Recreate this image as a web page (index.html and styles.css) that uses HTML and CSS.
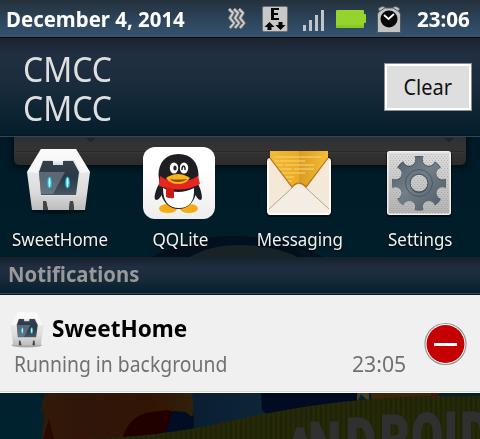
FILE: index.html
```html
<!DOCTYPE html>
<html lang="en">
<head>
<meta charset="utf-8">
<title>Notification panel</title>
<link rel="stylesheet" href="styles.css">
</head>
<body>
<main class="phone">
  <svg class="wallpaper" width="480" height="439" viewBox="0 0 480 439" aria-hidden="true">
    <defs>
      <linearGradient id="sea" x2="0" y2="1"><stop offset="0" stop-color="#001722"/><stop offset=".6" stop-color="#001e2a"/><stop offset="1" stop-color="#00222e"/></linearGradient>
      <linearGradient id="dock" x2="0" y2="1"><stop offset="0" stop-color="#2d2d2d"/><stop offset=".55" stop-color="#343434"/><stop offset="1" stop-color="#2b2b2b"/></linearGradient>
      <linearGradient id="fur" x2="1"><stop offset="0" stop-color="#321a07"/><stop offset=".3" stop-color="#30150a"/><stop offset=".75" stop-color="#321603"/><stop offset="1" stop-color="#30210c"/></linearGradient>
      <linearGradient id="globe" x2="1"><stop offset="0" stop-color="#0a1a30"/><stop offset=".5" stop-color="#0c2636"/><stop offset="1" stop-color="#010d25"/></linearGradient>
      <pattern id="weave" width="5" height="4" patternUnits="userSpaceOnUse"><path fill="#252908" d="M0 0h5v4H0z"/><path fill="#1f2307" d="M0 0h2v4H0z"/></pattern>
      <filter id="soft" x="-10%" y="-40%" width="120%" height="180%"><feGaussianBlur stdDeviation="3"/></filter>
    </defs>
    <path fill="url(#sea)" d="M0 0h480v439H0z"/>
    <path fill="#000" opacity=".6" filter="url(#soft)" d="M13 130h454v37H13z"/>
    <path fill="url(#dock)" d="M14 130h452v29q0 6-6 6H20q-6 0-6-6z"/>
    <path stroke="#292929" d="M17 151.500h446"/><path stroke="#383838" d="M17 152.500h446"/>
    <path fill="#222" d="M86 138h10l-5 4zM444 138h10l-5 4z"/>
    <path fill="#02101d" d="M150 258q40-22 80-22 55 0 95 22z"/>
    <path fill="#172326" d="M188 258q22-13 50-13 36 0 62 13z"/>
    <path fill="#031322" d="M285 242q18 6 34 16h-15q-8-9-19-16z"/>
    <path fill="url(#globe)" d="M190 390h167v49H160z"/>
    <path fill="#010b22" d="M261 392h96v22l-90 16 5-12-10-8z"/>
    <path fill="url(#fur)" d="M45 392l-5 22 4-5-2 30h90l60-18-13-8 15 5-3-8 3 1-2-19z"/>
    <path fill="#210100" d="M122 439q7-24 29-27l17-2 5 2-6 20-32 7z"/>
    <path fill="#010d25" d="M173 411l13 1 6 5 2-3v18h-28z"/>
    <path fill="#290900" d="M43 439l6-20 5 20z"/>
    <path fill="#463c20" d="M357 392h12v10l-8-8-4 9z"/>
    <path fill="#41250a" d="M371 392h60v6l-59 5z"/><path fill="#500f08" d="M431 392h8v5h-8z"/>
    <path fill="url(#weave)" d="M85 439q80-2 155-20 115-26 240-23v43z"/>
    <g transform="scale(.72 1)"><text class="banner-text" x="396 429 481 528 572 617 640" y="473 467 463 460 458 457 457">ANDROID</text></g>
  </svg>

  <header class="status">
    <span class="date"><span class="fit">December 4, 2014</span></span>
    <svg class="status-icons" width="182" height="37" viewBox="220 0 182 37" aria-hidden="true">
      <g fill="none" stroke-linejoin="round">
        <path stroke="#777" stroke-width="3.600" d="M229 9l4 4-3 5 4 5-4 5M234 9l4 4-3 5 4 5-4 5M239 9l4 4-3 5 4 5-4 5"/>
        <path stroke="#d0d0d0" stroke-width="1.800" d="M229 9l4 4-3 5 4 5-4 5M234 9l4 4-3 5 4 5-4 5M239 9l4 4-3 5 4 5-4 5"/>
      </g>
      <rect x="262.500" y="6.500" width="25" height="25" rx="1.500" fill="#c8c8c8" stroke="#6b7075"/>
      <path fill="#050505" d="M271 8h8v2h-5v3h4v2h-4v3h5v2h-8zM269.500 22l5 5h-3v3h-4v-3h-3zM278.500 22h4v3h3l-5 5-5-5h3z"/>
      <path fill="#c2c5c8" d="M303 25h3v6h-3zM309 20h3v11h-3zM315 15h3v16h-3zM321 10h3v21h-3z"/>
      <path fill="#94d42c" d="M337 10h26q1 0 1 1v3h1q1 0 1 1v7q0 1-1 1h-1v4q0 1-1 1h-26q-1 0-1-1V11q0-1 1-1z"/>
      <path fill="#79b51b" d="M336 25h28v2q0 1-1 1h-26q-1 0-1-1z" opacity=".4"/>
      <path fill="#c3c3c3" stroke="#53585c" d="M377.500 32.500V14l2-3q-2-2 0-3.500l3-1q2 0 3 1.500h7q1-1.500 3-1.500l3 1q2 1.500 0 3.500l2 3v18.500z"/>
      <path fill="none" stroke="#53585c" d="M379.500 11.500l6-4M398.500 11.500l-6-4"/>
      <circle cx="389" cy="19" r="8.500" fill="#080808"/><path fill="none" stroke="#fff" stroke-width="1.700" d="M384 15l4.500 4 5.500-5"/>
    </svg>
    <span class="clock"><span class="fit">23:06</span></span>
  </header>

  <section class="carrier">
    <div class="carrier-names"><span class="fit">CMCC</span><span class="fit">CMCC</span></div>
    <button class="clear"><span class="fit">Clear</span></button>
  </section>

  <nav class="apps">
    <a class="app">
      <svg width="80" height="80" viewBox="21 143 80 80" aria-hidden="true">
        <defs>
          <linearGradient id="shell" x2="0" y2="1"><stop offset="0" stop-color="#f4f4f4"/><stop offset=".7" stop-color="#dcdcdc"/><stop offset="1" stop-color="#bdbdbd"/></linearGradient>
          <linearGradient id="visor" x2="0" y2="1"><stop offset="0" stop-color="#35404d"/><stop offset=".5" stop-color="#2c3846"/><stop offset="1" stop-color="#475664"/></linearGradient>
          <g id="robot">
            <path fill="url(#shell)" d="M42 149h35l14 23-5 38H75l-1-9h-3l-1 9H49l-2-9h-3v9H33l-5-38z"/>
            <path fill="#fff" d="M42 149h35l14 23-10 1-5-12H44l-5 12-11-1z" opacity=".6"/>
            <path fill="#444" d="M44 201h3l2 9h-5zM71 201h3l1 9h-5z"/>
            <path fill="#dce0e3" d="M39 172l5-12h9v3h12v-3h10l6 12-3 24H42z"/>
            <path fill="url(#visor)" d="M40 172l4-11h10v4h10v-4h10l6 11-3 23H42z"/>
            <path fill="#83909b" opacity=".55" d="M40 172h26l-12 22H42z"/>
            <ellipse cx="50.500" cy="182.500" rx="2.400" ry="6" fill="#08b9d5"/><ellipse cx="50.500" cy="182.500" rx="1" ry="4.800" fill="#e4ffff"/>
            <ellipse cx="68.500" cy="182.500" rx="2.400" ry="6" fill="#08b9d5"/><ellipse cx="68.500" cy="182.500" rx="1" ry="4.800" fill="#e4ffff"/>
          </g>
        </defs>
        <ellipse cx="59" cy="211" rx="27" ry="3" fill="#000" opacity=".4"/>
        <use href="#robot"/>
      </svg>
      <span class="fit label-home">SweetHome</span>
    </a>
    <a class="app">
      <svg width="80" height="80" viewBox="140 143 80 80" aria-hidden="true">
        <defs><linearGradient id="tile" x2="0" y2="1"><stop offset=".3" stop-color="#fff"/><stop offset="1" stop-color="#ededed"/></linearGradient></defs>
        <rect x="143" y="147" width="72" height="72" rx="12" fill="url(#tile)"/>
        <ellipse cx="168" cy="208.500" rx="9" ry="4.500" fill="#f6aa13"/><ellipse cx="189" cy="208.500" rx="9" ry="4.500" fill="#f6aa13"/>
        <path fill="#1e1f22" d="M178.500 154c-13 0-20 9-20 21l1 8c-4 7-7 17-3 17 2 0 4-3 5-5 2 8 9 14 17 14s15-6 17-14c1 2 3 5 5 5 3 0 1-10-3-17l1-8c0-12-7-21-20-21z"/>
        <path fill="#fff" d="M163 188q15 8 31 0 1 20-15 20t-16-20z"/>
        <path fill="#e72620" d="M160 176q18 12 38 0l2 8q-18 10-41 2z"/><path fill="#cc1913" d="M166 187l8 2v9q-4 1-8-1z"/>
        <ellipse cx="174" cy="168" rx="4.200" ry="5.500" fill="#fff"/><ellipse cx="184" cy="168" rx="4.200" ry="5.500" fill="#fff"/>
        <ellipse cx="175" cy="168" rx="1.700" ry="2.500" fill="#222"/><path fill="none" stroke="#222" stroke-width="1.500" d="M182 170v-2q1.500-4 3 0v2"/>
        <path fill="#f8b419" d="M166 178q6-4 12-4t12 4q-4 6-12 6t-12-6z"/><path fill="#8e4b0c" d="M170 179q8 1 17 0-3 3-9 3t-8-3z"/>
      </svg>
      <span class="fit label-qq">QQLite</span>
    </a>
    <a class="app">
      <svg width="80" height="80" viewBox="260 143 80 80" aria-hidden="true">
        <defs>
          <linearGradient id="paper" x2="1"><stop offset="0" stop-color="#f3bb35"/><stop offset=".5" stop-color="#eaaa25"/><stop offset=".51" stop-color="#d89c24"/><stop offset="1" stop-color="#f7bd35"/></linearGradient>
          <linearGradient id="env" x2="0" y2="1"><stop offset="0" stop-color="#f8e8d4"/><stop offset="1" stop-color="#f1e9dd"/></linearGradient>
        </defs>
        <rect x="266" y="157" width="66" height="60" rx="4" fill="#000" opacity=".4"/>
        <path fill="url(#paper)" d="M270 151h58v40h-58z"/>
        <path stroke="#f8cf69" stroke-width="2" opacity=".6" d="M275 157h47M275 161h30M275 165h8M285 165h29M275 169h17M294 169h20M279 173h26M284 177h10M287 181h5"/>
        <path fill="url(#env)" d="M267 161q0-3 3-3l22 30q7-8 14 0l22-30q3 0 3 3v50q0 4-4 4h-56q-4 0-4-4z"/>
        <path fill="#f3ede4" d="M268 210l24-22q7-7 14 0l24 22v3q0 2-3 2h-56q-3 0-3-2z"/>
        <path fill="none" stroke="#b3a597" d="M268 210l24-22M306 188l24 22"/>
        <path fill="none" stroke="#ba701d" stroke-width="1.200" d="M270 158l22 29q7-8 14 0l22-29"/>
        <path fill="none" stroke="#fff" stroke-width="1.600" d="M268 161v50q0 3 3 3h56q3 0 3-3v-50"/>
      </svg>
      <span class="fit label-msg">Messaging</span>
    </a>
    <a class="app">
      <svg width="80" height="80" viewBox="380 143 80 80" aria-hidden="true">
        <defs>
          <linearGradient id="metal" x2="0" y2="1"><stop offset="0" stop-color="#dedede"/><stop offset="1" stop-color="#b3b3b3"/></linearGradient>
          <pattern id="dots" width="3" height="4" patternUnits="userSpaceOnUse"><path fill="#888" opacity=".45" d="M0 0h1v1H0zM1.500 2h1v1h-1z"/></pattern>
          <linearGradient id="steel" x2="1" y2="1"><stop offset="0" stop-color="#4c5963"/><stop offset=".45" stop-color="#727e88"/><stop offset="1" stop-color="#4a5663"/></linearGradient>
          <mask id="teeth"><circle cx="419" cy="183" r="27" fill="#fff"/><g fill="#000"><circle cx="419" cy="183" r="9"/><circle cx="428.800" cy="159.500" r="6.300"/><circle cx="442.500" cy="173.200" r="6.300"/><circle cx="442.500" cy="192.800" r="6.300"/><circle cx="428.800" cy="206.500" r="6.300"/><circle cx="409.200" cy="206.500" r="6.300"/><circle cx="395.500" cy="192.800" r="6.300"/><circle cx="395.500" cy="173.200" r="6.300"/><circle cx="409.200" cy="159.500" r="6.300"/></g></mask>
        </defs>
        <rect x="386" y="152" width="66" height="65" rx="3" fill="#000" opacity=".5"/>
        <rect x="387.700" y="151.700" width="62.600" height="62.600" rx="2" fill="url(#metal)" stroke="#f0f0f0" stroke-width="1.400"/>
        <rect x="389" y="153" width="60" height="60" fill="url(#dots)"/>
        <g mask="url(#teeth)"><path fill="#34414c" d="M390 154h58v58h-58z"/></g>
        <g mask="url(#teeth)" transform="translate(0 .8)"><path fill="url(#steel)" d="M390 154h58v58h-58z"/></g>
        <circle cx="419" cy="183" r="13.500" fill="none" stroke="#4b5761" stroke-width="1"/><circle cx="419" cy="183" r="9" fill="none" stroke="#48535d"/>
      </svg>
      <span class="fit label-set">Settings</span>
    </a>
  </nav>

  <h2 class="section-title"><span class="fit">Notifications</span></h2>

  <article class="notice">
    <div class="notice-body">
      <div class="notice-head">
        <svg width="34" height="36" viewBox="27 148 65 67" preserveAspectRatio="none" aria-hidden="true"><ellipse cx="59" cy="210" rx="29" ry="4" fill="#777" opacity=".6"/><use href="#robot"/></svg>
        <strong class="fit">SweetHome</strong>
      </div>
      <div class="notice-detail"><span class="fit running">Running in background</span><time class="fit time">23:05</time></div>
    </div>
    <button class="remove" aria-label="Remove"><svg width="44" height="44" viewBox="0 0 44 44"><circle cx="22.500" cy="22" r="20.500" fill="#fff" stroke="#969696" stroke-width="1.200"/><circle cx="22.500" cy="22" r="19" fill="#c40000"/><path stroke="#fff" stroke-width="3" d="M11 22.500h23"/></svg></button>
  </article>
</main>
</body>
</html>
```

FILE: styles.css
```css
* { box-sizing: border-box; }
body { margin: 0; background: #001e2a; font-family: "Noto Sans", "Open Sans", sans-serif; }
button { padding: 0; border: 0; background: none; font: inherit; }
.phone { position: relative; isolation: isolate; width: 480px; height: 439px; overflow: hidden; }
.wallpaper { position: absolute; inset: 0; z-index: -1; }
.banner-text { font: 700 62px Roboto, sans-serif; fill: #303030; stroke: #303030; stroke-width: 3px; }
.fit { display: inline-block; white-space: nowrap; transform-origin: 0 50%; }

.status { display: flex; height: 38px; border-bottom: 1px solid #000; background: linear-gradient(#24313c, #2c4359 50%, #355470); color: #fff; font-weight: 700; font-size: 21px; line-height: 39px; }
.date { width: 220px; padding-left: 6px; }
.date .fit { transform: scaleX(.972); }
.clock { padding-left: 15px; }
.clock .fit { transform: scaleX(.98); }

.carrier { display: flex; justify-content: space-between; height: 99px; padding: 12px 8px 0 23px; border-bottom: 1px solid #34445a; background: linear-gradient(#1b2430, #212f42 18%, #182b3b 52%, #031d2b); box-shadow: inset 0 -1px #061722; }
.carrier-names { display: flex; flex-direction: column; color: #dfdfdf; font-size: 34px; line-height: 39px; }
.carrier-names .fit { transform: scaleX(.94); }
.clear { width: 88px; height: 48px; margin-top: 13px; border: 1px solid #8e8e8e; background: #dedede; box-shadow: inset 0 0 0 2px #fff; color: #111; font-size: 22px; line-height: 42px; }
.clear .fit { transform: translateY(-1px) scaleX(.91); transform-origin: 50% 50%; }

.apps { display: grid; grid-template-columns: repeat(4, 120px); height: 120px; padding-top: 6px; }
.app { display: flex; flex-direction: column; align-items: center; color: #f1f1f1; font-size: 18px; line-height: 32px; text-shadow: 0 1px 2px #000; }
.app .fit { transform: scaleX(.94); transform-origin: 50% 50%; }
.app .label-qq { transform: scaleX(.95); }

.section-title { height: 38px; margin: 0; padding-left: 8px; border-bottom: 1px solid #111; background: linear-gradient(#17202b, #202e41 28%, #172a3a 60%, #051e2a); box-shadow: inset 0 -1px #34465a; color: #999; font-size: 21px; line-height: 35px; }
.section-title .fit { transform: scaleX(.965); }

.notice { display: flex; height: 98px; background: #f0f0f0; border-bottom: 1px solid #fff; box-shadow: inset 0 -1px #d5d8d5; }
.notice-body { width: 423px; padding: 16px 0 0 10px; }
.notice-head { display: flex; align-items: center; gap: 8px; height: 37px; color: #000; font-size: 23px; line-height: 36px; }
.notice-head .fit { margin-top: -4px; transform: scaleX(.98); }
.notice-detail { display: flex; justify-content: space-between; padding: 0 17px 0 4px; color: #717171; font-size: 22px; line-height: 30px; }
.running { transform: scaleX(.88); }
.time { transform: scaleX(.965); transform-origin: 100% 50%; }
.remove { width: 44px; height: 44px; margin-top: 27px; }
.remove svg { display: block; }
```
